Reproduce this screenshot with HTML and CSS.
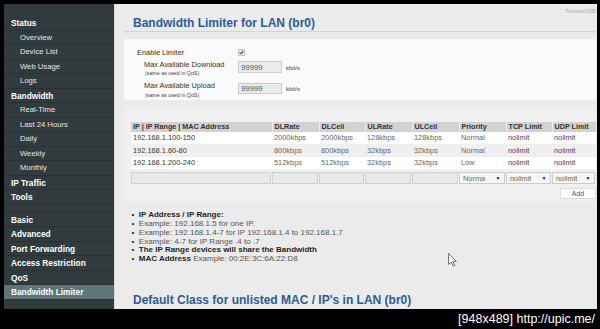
FILE: index.html
```html
<!DOCTYPE html>
<html lang="en">
<head>
  <meta charset="UTF-8" />
  <title>Bandwidth Limiter</title>
  <link rel="stylesheet" href="styles.css">
</head>
<body>

<div class="screen">
  <!-- SIDEBAR -->
  <nav class="sidebar">
    <a class="nav-head">Status</a>
    <a class="nav-sub">Overview</a>
    <a class="nav-sub">Device List</a>
    <a class="nav-sub">Web Usage</a>
    <a class="nav-sub">Logs</a>
    <a class="nav-head">Bandwidth</a>
    <a class="nav-sub">Real-Time</a>
    <a class="nav-sub">Last 24 Hours</a>
    <a class="nav-sub">Daily</a>
    <a class="nav-sub">Weekly</a>
    <a class="nav-sub">Monthly</a>
    <a class="nav-head">IP Traffic</a>
    <a class="nav-head">Tools</a>
    <div class="nav-gap"></div>
    <a class="nav-head">Basic</a>
    <a class="nav-head">Advanced</a>
    <a class="nav-head">Port Forwarding</a>
    <a class="nav-head">Access Restriction</a>
    <a class="nav-head">QoS</a>
    <a class="nav-head active">Bandwidth Limiter</a>
  </nav>

  <!-- MAIN -->
  <main class="content">
    <div class="page-head">
      <h1>Bandwidth Limiter for LAN (br0)</h1>
      <span class="brand">TomatoUSB</span>
    </div>

    <section class="box limiter">
      <div class="lbl">Enable Limiter</div>
      <div class="cell"><span class="check"><svg viewBox="0 0 7 7"><path d="M1.2 3.6 L2.8 5.4 L5.9 1.2" /></svg></span></div>
      <div class="cell"></div>

      <div class="lbl sub">Max Available Download<small>(same as used in QoS)</small></div>
      <div class="cell"><input class="num" type="text" value="99999"></div>
      <div class="unit">kbit/s</div>

      <div class="lbl sub">Max Available Upload<small>(same as used in QoS)</small></div>
      <div class="cell"><input class="num" type="text" value="99999"></div>
      <div class="unit">kbit/s</div>
    </section>

    <section class="box rules-box">
      <table class="rules">
        <colgroup>
          <col style="width:141px"><col style="width:47px"><col style="width:46px"><col style="width:47px">
          <col style="width:47px"><col style="width:47px"><col style="width:46px"><col style="width:44px">
        </colgroup>
        <thead>
          <tr>
            <th>IP | IP Range | MAC Address</th><th>DLRate</th><th>DLCeil</th><th>ULRate</th>
            <th>ULCeil</th><th>Priority</th><th>TCP Limit</th><th>UDP Limit</th>
          </tr>
        </thead>
        <tbody>
          <tr>
            <td class="ip">192.168.1.100-150</td><td>2000kbps</td><td>2000kbps</td><td>128kbps</td>
            <td>128kbps</td><td>Normal</td><td class="lim">nolimit</td><td class="lim">nolimit</td>
          </tr>
          <tr class="alt">
            <td class="ip">192.168.1.60-80</td><td>800kbps</td><td>800kbps</td><td>32kbps</td>
            <td>32kbps</td><td>Normal</td><td class="lim">nolimit</td><td class="lim">nolimit</td>
          </tr>
          <tr>
            <td class="ip">192.168.1.200-240</td><td>512kbps</td><td>512kbps</td><td>32kbps</td>
            <td>32kbps</td><td>Low</td><td class="lim">nolimit</td><td class="lim">nolimit</td>
          </tr>
          <tr class="edit">
            <td><input type="text"></td><td><input type="text"></td><td><input type="text"></td><td><input type="text"></td>
            <td><input type="text"></td>
            <td><span class="pick">Norma<i>&#9660;</i></span></td>
            <td><span class="pick">nolimit<i>&#9660;</i></span></td>
            <td><span class="pick">nolimit<i>&#9660;</i></span></td>
          </tr>
        </tbody>
      </table>
      <div class="add-row"><button class="btn-add">Add</button></div>
    </section>

    <ul class="notes">
      <li><b>IP Address / IP Range:</b></li>
      <li>Example: 192.168.1.5 for one IP.</li>
      <li>Example: 192.168.1.4-7 for IP 192.168.1.4 to 192.168.1.7</li>
      <li>Example: 4-7 for IP Range .4 to .7</li>
      <li><b>The IP Range devices will share the Bandwidth</b></li>
      <li><b>MAC Address</b> Example: 00:2E:3C:6A:22:D8</li>
    </ul>

    <h2>Default Class for unlisted MAC / IP's in LAN (br0)</h2>

    <svg class="cursor" viewBox="0 0 10 14">
      <path d="M0.5 0.5 L0.5 11.5 L3.2 9 L5.2 13.2 L6.8 12.5 L4.9 8.4 L8.4 8.4 Z" />
    </svg>
  </main>
</div>

<div class="watermark">[948x489] http://upic.me/</div>

</body>
</html>
```

FILE: styles.css
```css
* {
  box-sizing: border-box;
  margin: 0;
  padding: 0;
}

body {
  background: #000;
  width: 600px;
  height: 329px;
  overflow: hidden;
  font-family: 'Liberation Sans', Arial, sans-serif;
}

.screen {
  display: flex;
  height: 309px;
  padding: 4px 3px 0 4px;
}

/* sidebar */
.sidebar {
  width: 110px;
  flex: none;
  background: #313b3d;
  padding-top: 12px;
}

.sidebar a {
  display: block;
  height: 14.5px;
  line-height: 14px;
  border-bottom: 1px solid #283133;
  white-space: nowrap;
  text-decoration: none;
}

.nav-head {
  padding-left: 7px;
  color: #fff;
  font-weight: bold;
  font-size: 8.3px;
}

.nav-sub {
  padding-left: 16px;
  color: #e2e6e7;
  font-size: 7.7px;
}

.sidebar a.active {
  background: #5e7579;
}

.nav-gap {
  height: 8px;
  border-bottom: 1px solid #283133;
}

/* content */
.content {
  flex: 1;
  background: #ebebeb;
  border-left: 1px solid #d6d6d6;
  padding: 0 1px 0 9px;
  overflow: hidden;
  position: relative;
}

.page-head {
  display: flex;
  align-items: flex-start;
  padding: 0 0 1px 9px;
  border-bottom: 1px solid #d3d3d3;
}

h1, h2 {
  font-size: 12px;
  line-height: 14px;
  font-weight: bold;
  color: #2e5a9a;
}

h1 {
  padding-top: 12px;
}

.brand {
  margin-left: auto;
  margin-top: 4px;
  font-size: 5.8px;
  line-height: 7px;
  color: #a9a9a9;
}

.box {
  margin-top: 7px;
}

/* limiter settings */
.limiter {
  height: 61px;
  background: #fafafa;
  padding: 8.75px 0 0 13px;
  display: grid;
  grid-template-columns: 101px 48px auto;
  row-gap: 2.5px;
  align-items: start;
}

.cell {
  line-height: 0;
}

.lbl {
  font-size: 7.4px;
  line-height: 9.5px;
  color: #333;
}

.lbl.sub {
  padding-left: 7px;
}

.lbl small {
  display: block;
  font-size: 5.3px;
  padding-left: 1px;
  color: #444;
}

.check {
  display: block;
  width: 7px;
  height: 7px;
  margin-top: 1.5px;
  background: #e2e2e2;
  border: 1px solid #c4c4c4;
  border-radius: 1px;
}

.check svg {
  display: block;
  width: 5px;
  height: 5px;
  fill: none;
  stroke: #222;
  stroke-width: 1.4;
}

.num {
  display: block;
  width: 44px;
  height: 11.5px;
  margin-top: 1.5px;
  border: 1px solid #cbcbcb;
  background: #ebebeb;
  padding-left: 2px;
  font-family: inherit;
  font-size: 7.8px;
  color: #555;
}

.unit {
  padding-top: 4px;
  font-size: 6px;
  line-height: 8px;
  color: #444;
}

/* rules table */
.rules-box {
  height: 95px;
  background: #f0f0f0;
  padding: 14.5px 0 0 7px;
}

.rules {
  width: 465px;
  table-layout: fixed;
  border-collapse: collapse;
}

.rules th {
  height: 10px;
  background: #d2d2d2;
  border-left: 1px solid #eeeeee;
  text-align: left;
  padding: 0 2px;
  font-size: 7.2px;
  color: #333;
  white-space: nowrap;
}

.rules th:first-child {
  border-left: none;
}

.rules td {
  height: 12.5px;
  padding: 0 2px;
  background: #fff;
  font-size: 7.4px;
  color: #666;
  white-space: nowrap;
}

.rules tr.alt td {
  background: #efefef;
}

.rules td.ip {
  color: #333;
}

.rules td.lim {
  color: #4a3b6c;
}

.rules tr.edit td {
  height: 15px;
  background: transparent;
  padding: 3px 1.5px 0 0;
  vertical-align: top;
}

.rules tr.edit input {
  display: block;
  width: 100%;
  height: 12px;
  border: 1px solid #d0d0d0;
  background: #e9e9e9;
}

.pick {
  display: flex;
  justify-content: space-between;
  align-items: center;
  height: 12px;
  padding: 0 3px;
  border: 1px solid #cccccc;
  background: #f6f6f6;
  font-size: 7.4px;
  color: #666;
}

.pick i {
  font-style: normal;
  font-size: 5px;
  color: #222;
}

.add-row {
  display: flex;
  justify-content: flex-end;
  margin-top: 3.5px;
}

.btn-add {
  width: 36px;
  height: 11.5px;
  border: 1px solid #dcdcdc;
  background: #fff;
  font-family: inherit;
  font-size: 7px;
  color: #555;
}

/* notes */
.notes {
  list-style: none;
  margin-top: 9.4px;
  padding-left: 7.5px;
  font-size: 8px;
  line-height: 8.7px;
  color: #555;
}

.notes li::before {
  content: "\2022";
  display: inline-block;
  width: 7.3px;
  color: #222;
}

.notes b {
  color: #1e1e1e;
}

h2 {
  margin-top: 29.2px;
  padding-left: 9px;
  white-space: nowrap;
}

.cursor {
  position: absolute;
  left: 333px;
  top: 249px;
  width: 10px;
  height: 14px;
  fill: #fafafa;
  stroke: #555;
  stroke-width: 0.8;
}

.watermark {
  height: 20px;
  line-height: 20px;
  text-align: right;
  padding-right: 5px;
  font-size: 12.5px;
  color: #fff;
}
```
